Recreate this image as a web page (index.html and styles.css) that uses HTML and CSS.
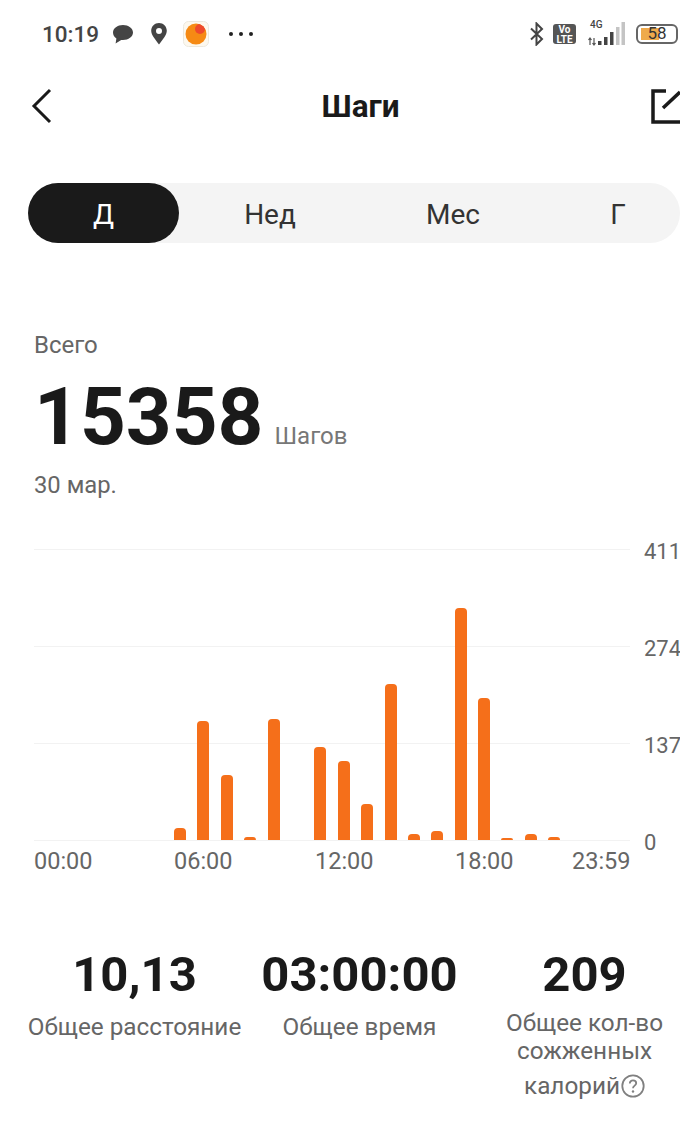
FILE: index.html
```html
<!DOCTYPE html>
<html>
    <head>
        <title>Шаги</title>
        <meta charset="utf-8">
        <link rel="stylesheet" href="styles.css">
    </head>
    <body>
        <div class="status">
            <span class="time">10:19</span>
            <svg class="ic-chat" width="22" height="22" viewBox="0 0 22 22"><path d="M11 2C5.500 2 1 5.300 1 9.600c0 2.500 1.300 4.600 3.400 6L3.600 20.500l5.600-3.500c.6.100 1.200.1 1.800.1 5.500 0 10-3.200 10-7.500S16.500 2 11 2z" fill="#444"/></svg>
            <svg class="ic-pin" width="18" height="24" viewBox="0 0 18 24"><path fill-rule="evenodd" d="M9 1C4.700 1 1.200 4.400 1.200 8.700c0 2.200 1 4.200 2.300 6.200C5 17.300 7.300 20 9 22.500c1.700-2.500 4-5.200 5.500-7.600 1.300-2 2.300-4 2.300-6.200C16.800 4.400 13.300 1 9 1zm0 5a3 3 0 1 1 0 6 3 3 0 0 1 0-6z" fill="#444"/></svg>
            <svg class="ic-app" width="26" height="26" viewBox="0 0 26 26"><defs><clipPath id="appball"><circle cx="13" cy="13" r="10.500"/></clipPath></defs><rect x=".5" y=".5" width="25" height="25" rx="5" fill="#fdf8ee" stroke="#ece8de"/><circle cx="13" cy="13" r="10.500" fill="#f68a14"/><circle cx="17" cy="8" r="5" fill="#ee4a2c" clip-path="url(#appball)"/></svg>
            <div class="dots"><i></i><i></i><i></i></div>
            <div class="status-right">
                <svg width="18" height="24" viewBox="0 0 18 24"><path d="M3 6.500l11 10.500-5.500 5.500V1.500L14 7 3 17.500" fill="none" stroke="#444" stroke-width="2"/></svg>
                <div class="volte">Vo<br>LTE</div>
                <div class="signal">
                    <span class="net">4G</span>
                    <svg width="38" height="24" viewBox="0 0 38 24"><path d="M2 16v7M.5 18L2 16l1.500 2M6 16v7M4.500 21L6 23l1.500-2" fill="none" stroke="#555" stroke-width="1.200"/><rect x="10" y="19" width="3.500" height="4" fill="#444"/><rect x="16" y="15" width="3.500" height="8" fill="#444"/><rect x="22" y="10" width="3.500" height="13" fill="#444"/><rect x="28" y="5" width="3.500" height="18" fill="#c4c4c4"/><rect x="33.500" y="0" width="3.500" height="23" fill="#c4c4c4"/></svg>
                </div>
                <div class="battery"><span class="battery-fill"></span><span class="battery-num">58</span></div>
            </div>
        </div>

        <div class="topbar">
            <svg class="back" width="24" height="36" viewBox="0 0 24 36"><path d="M20 2L4 18l16 16" fill="none" stroke="#1a1a1a" stroke-width="3"/></svg>
            <h1>Шаги</h1>
            <svg class="share" width="29" height="36" viewBox="0 0 29 36"><path d="M15 3H2v31h27M12 20L29 4" fill="none" stroke="#1a1a1a" stroke-width="3.500"/></svg>
        </div>

        <div class="tabs">
            <div class="tab active t1">Д</div>
            <div class="tab t2">Нед</div>
            <div class="tab t3">Мес</div>
            <div class="tab t4">Г</div>
        </div>

        <div class="summary">
            <div class="sum-label">Всего</div>
            <div class="sum-row"><span class="sum-num">15358</span><span class="sum-unit">Шагов</span></div>
            <div class="sum-date">30 мар.</div>
        </div>

        <div class="chart">
            <div class="plot">
                <div class="grid-row"><span>411</span></div>
                <div class="grid-row"><span>274</span></div>
                <div class="grid-row"><span>137</span></div>
                <div class="grid-row last"><span>0</span></div>
                <div class="bars">
                    <i style="height:12px"></i>
                    <i style="height:119px"></i>
                    <i style="height:65px"></i>
                    <i style="height:3px"></i>
                    <i style="height:121px"></i>
                    <i style="height:0"></i>
                    <i style="height:93px"></i>
                    <i style="height:79px"></i>
                    <i style="height:36px"></i>
                    <i style="height:156px"></i>
                    <i style="height:6px"></i>
                    <i style="height:9px"></i>
                    <i style="height:232px"></i>
                    <i style="height:142px"></i>
                    <i style="height:2px"></i>
                    <i style="height:6px"></i>
                    <i style="height:3px"></i>
                </div>
            </div>
            <div class="x-axis">
                <span>00:00</span>
                <span>06:00</span>
                <span>12:00</span>
                <span>18:00</span>
                <span>23:59</span>
            </div>
        </div>

        <div class="stats">
            <div class="stat">
                <div class="stat-val">10,13</div>
                <div class="stat-label">Общее расстояние</div>
            </div>
            <div class="stat">
                <div class="stat-val">03:00:00</div>
                <div class="stat-label">Общее время</div>
            </div>
            <div class="stat">
                <div class="stat-val">209</div>
                <div class="stat-label narrow">Общее кол-во сожженных калорий<svg class="help" width="24" height="24" viewBox="0 0 24 24"><circle cx="12" cy="12" r="10.700" fill="none" stroke="#808080" stroke-width="1.800"/><path d="M8.800 9.500c0-1.900 1.400-3.100 3.200-3.100s3.200 1.200 3.200 2.800c0 2.400-3.200 2.400-3.200 5" fill="none" stroke="#808080" stroke-width="1.800"/><circle cx="12" cy="17.500" r="1.200" fill="#808080"/></svg></div>
            </div>
        </div>
    </body>
</html>
```

FILE: styles.css
```css
html, body {
    margin: 0;
    height: 100%;
}
body {
    width: 680px;
    overflow: hidden;
    background: #fff;
    color: #1a1a1a;
    font-family: Roboto, "Noto Sans", sans-serif;
}

/* status bar */
.status {
    display: flex;
    align-items: center;
    height: 68px;
    padding-left: 42px;
}
.time {
    font-size: 22.500px;
    font-weight: 500;
    color: #444;
}
.ic-chat {
    margin-left: 13px;
}
.ic-pin {
    margin-left: 16px;
}
.ic-app {
    margin-left: 15px;
}
.dots {
    display: flex;
    gap: 6px;
    margin-left: 20px;
}
.dots i {
    width: 4px;
    height: 4px;
    border-radius: 50%;
    background: #222;
}
.status-right {
    display: flex;
    align-items: center;
    margin-left: auto;
    padding-right: 2px;
}
.volte {
    width: 23px;
    height: 20px;
    margin-left: 7px;
    border-radius: 3px;
    background: #555;
    color: #fff;
    font-size: 10px;
    font-weight: 700;
    line-height: 9.500px;
    text-align: center;
    padding-top: 1px;
    box-sizing: border-box;
}
.signal {
    position: relative;
    margin-left: 12px;
    display: flex;
}
.net {
    position: absolute;
    left: 2px;
    top: -3px;
    font-size: 10px;
    font-weight: 500;
    color: #444;
}
.battery {
    position: relative;
    width: 42px;
    height: 20px;
    margin-left: 10px;
    border: 2.500px solid #666;
    border-radius: 6px;
    box-sizing: border-box;
    font-size: 17px;
    line-height: 15px;
    text-align: center;
    color: #333;
}
.battery-fill {
    position: absolute;
    left: 3px;
    top: 2px;
    bottom: 2px;
    width: 18px;
    background: #efaa4c;
}
.battery-num {
    position: relative;
}

/* top bar */
.topbar {
    display: flex;
    align-items: center;
    height: 75px;
    padding-left: 30px;
}
.topbar h1 {
    flex: 1;
    margin: 2px 0 0 16px;
    font-size: 31.500px;
    font-weight: 700;
    text-align: center;
}

/* period tabs */
.tabs {
    display: flex;
    width: 652px;
    height: 60px;
    margin: 40px 0 0 28px;
    border-radius: 30px;
    background: #f4f4f4;
}
.tab {
    display: flex;
    flex: none;
    align-items: center;
    justify-content: center;
    box-sizing: border-box;
    padding-top: 3px;
    font-size: 28px;
    color: #333;
}
.active {
    background: #1a1a1a;
    color: #fff;
    border-radius: 30px;
}
.t1 { width: 151px; }
.t2 { width: 182px; }
.t3 { width: 184px; }
.t4 { width: 135px; padding-left: 11px; }

/* total */
.summary {
    padding: 86px 0 0 34px;
}
.sum-label, .sum-date {
    font-size: 24px;
    line-height: 32px;
    color: #666;
}
.sum-date {
    font-size: 23.800px;
}
.sum-row {
    display: flex;
    align-items: baseline;
    padding: 10px 0 6px;
}
.sum-num {
    font-size: 80px;
    font-weight: 700;
    line-height: 92px;
}
.sum-unit {
    font-size: 24px;
    color: #777;
    margin-left: 11px;
}

/* chart */
.chart {
    margin: 48px 0 0 34px;
}
.plot {
    position: relative;
    width: 646px;
}
.grid-row {
    display: flex;
    height: 96px;
    border-top: 1px solid #f2f2f2;
    width: 596px;
    position: relative;
}
.grid-row.last {
    height: 0;
}
.grid-row span {
    position: absolute;
    left: 610px;
    top: -11px;
    font-size: 22px;
    line-height: 26px;
    color: #666;
}
.bars {
    position: absolute;
    left: 140px;
    bottom: 1px;
    display: flex;
    align-items: flex-end;
    gap: 11.400px;
}
.bars i {
    width: 12px;
    background: #f56f1a;
    border-radius: 4px 4px 0 0;
}
.x-axis {
    display: grid;
    grid-template-columns: 140px 141px 140px 117px auto;
    width: 596px;
    margin-top: 7px;
    font-size: 23.500px;
    line-height: 27px;
    color: #666;
}

/* bottom numbers */
.stats {
    display: grid;
    grid-template-columns: repeat(3, 225px);
    margin: 73px 0 0 22px;
    text-align: center;
}
.stat-val {
    font-size: 49px;
    font-weight: 700;
    line-height: 54px;
}
.stat-label {
    margin-top: 10px;
    font-size: 24.300px;
    line-height: 30px;
    color: #666;
}
.stat-label.narrow {
    margin: 7px auto 0;
    width: 170px;
    line-height: 28px;
}
.help {
    vertical-align: -4px;
    margin: 9px 0 0 1px;
}
```
